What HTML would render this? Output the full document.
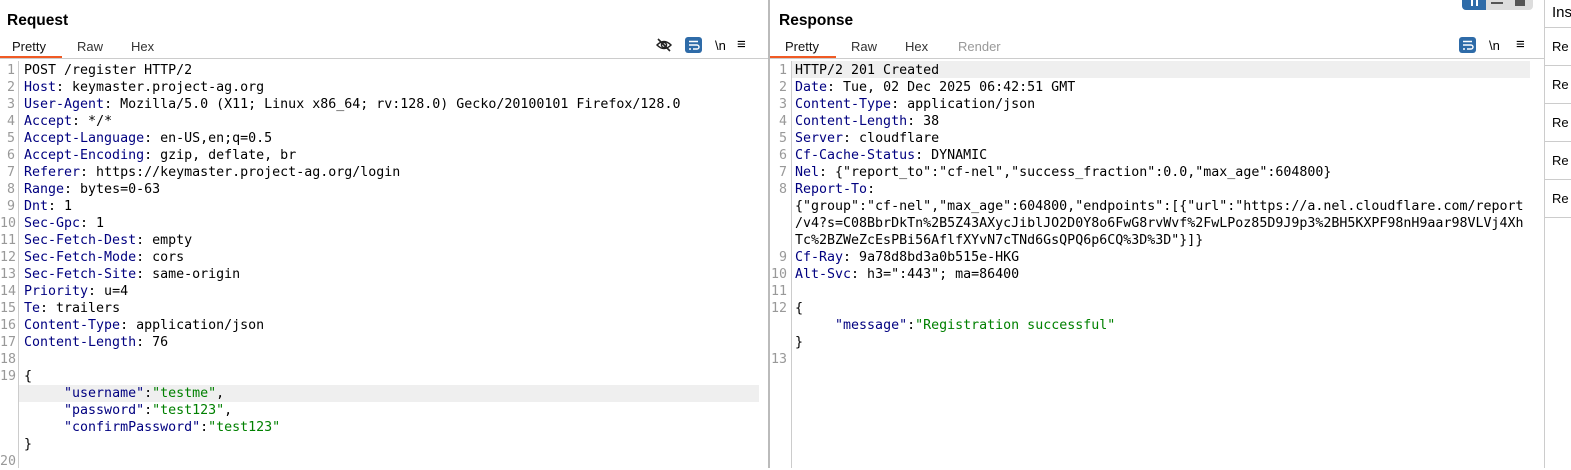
<!DOCTYPE html>
<html><head><meta charset="utf-8"><style>
*{margin:0;padding:0;box-sizing:border-box}
body{width:1571px;height:468px;overflow:hidden;background:#fff;font-family:"Liberation Sans","DejaVu Sans",sans-serif;color:#000;position:relative}
.abs{position:absolute}
.title{font-weight:bold;font-size:15.5px;top:12px}
.tab{font-size:13px;top:39px;color:#333}
.code{font-family:"DejaVu Sans Mono","Liberation Mono",monospace;font-size:13.3px;line-height:17px;white-space:pre;color:#000}
.ln{font-family:"DejaVu Sans Mono","Liberation Mono",monospace;font-size:13.3px;line-height:17px;color:#999;text-align:right;white-space:pre}
.k{color:#000080}.s{color:#008000}
.icon{position:absolute;top:38px;font-size:13px}
.btn{position:absolute;top:37px;width:17px;height:16px;background:#2e6ba8;border-radius:3px}
.sb{position:absolute;left:1545px;width:26px;border-bottom:1px solid #ccc;font-size:13px;padding-left:7px}
</style></head><body>
<div class="abs title" style="left:7px">Request</div>
<div class="abs tab" style="left:12px;color:#111">Pretty</div>
<div class="abs tab" style="left:77px">Raw</div>
<div class="abs tab" style="left:131px">Hex</div>
<div class="abs" style="left:0;top:56px;width:62px;height:2px;background:#f05a24"></div>
<div class="abs" style="left:0;top:58px;width:769px;height:1px;background:#ccc"></div>
<svg class="abs" style="left:656px;top:38px" width="16" height="14" viewBox="0 0 16 14"><path d="M1 7 Q8 0 15 7 Q8 14 1 7Z" fill="none" stroke="#222" stroke-width="1.5"/><circle cx="8" cy="7" r="2.5" fill="none" stroke="#222" stroke-width="1.5"/><path d="M2 1 L14 13" stroke="#222" stroke-width="1.6"/></svg>
<div class="btn" style="left:685px"><svg width="17" height="16"><path d="M4 4.5h9M4 8h8a2 2 0 0 1 0 4h-4M4 12h2" stroke="#fff" stroke-width="1.4" fill="none"/></svg></div>
<div class="icon" style="left:715px">\n</div>
<div class="icon" style="left:737px;font-size:15px;top:36px">≡</div>
<div class="abs" style="left:18px;top:385px;width:741px;height:17px;background:#efefef"></div>
<div class="abs" style="left:18px;top:61px;width:1px;height:407px;background:#ccc"></div>
<div class="abs ln" style="left:0;top:62px;width:15px">1
2
3
4
5
6
7
8
9
10
11
12
13
14
15
16
17
18
19



</div>
<div class="abs ln" style="left:0;top:453px;width:15px">20</div>
<div class="abs code" style="left:24px;top:62px">POST /register HTTP/2
<span class="k">Host</span>: keymaster.project-ag.org
<span class="k">User-Agent</span>: Mozilla/5.0 (X11; Linux x86_64; rv:128.0) Gecko/20100101 Firefox/128.0
<span class="k">Accept</span>: */*
<span class="k">Accept-Language</span>: en-US,en;q=0.5
<span class="k">Accept-Encoding</span>: gzip, deflate, br
<span class="k">Referer</span>: https://keymaster.project-ag.org/login
<span class="k">Range</span>: bytes=0-63
<span class="k">Dnt</span>: 1
<span class="k">Sec-Gpc</span>: 1
<span class="k">Sec-Fetch-Dest</span>: empty
<span class="k">Sec-Fetch-Mode</span>: cors
<span class="k">Sec-Fetch-Site</span>: same-origin
<span class="k">Priority</span>: u=4
<span class="k">Te</span>: trailers
<span class="k">Content-Type</span>: application/json
<span class="k">Content-Length</span>: 76

{
     <span class="k">"username"</span>:<span class="s">"testme"</span>,
     <span class="k">"password"</span>:<span class="s">"test123"</span>,
     <span class="k">"confirmPassword"</span>:<span class="s">"test123"</span>
}</div>
<div class="abs" style="left:768px;top:0;width:2px;height:468px;background:#bbb"></div>
<div class="abs title" style="left:779px">Response</div>
<div class="abs tab" style="left:785px;color:#111">Pretty</div>
<div class="abs tab" style="left:851px">Raw</div>
<div class="abs tab" style="left:905px">Hex</div>
<div class="abs tab" style="left:958px;color:#999">Render</div>
<div class="abs" style="left:770px;top:56px;width:66px;height:2px;background:#f05a24"></div>
<div class="abs" style="left:770px;top:58px;width:774px;height:1px;background:#ccc"></div>
<div class="btn" style="left:1459px"><svg width="17" height="16"><path d="M4 4.5h9M4 8h8a2 2 0 0 1 0 4h-4M4 12h2" stroke="#fff" stroke-width="1.4" fill="none"/></svg></div>
<div class="icon" style="left:1489px">\n</div>
<div class="icon" style="left:1516px;font-size:15px;top:36px">≡</div>
<div class="abs" style="left:1462px;top:0;width:71px;height:10px;background:#ddd;border-radius:0 0 4px 4px"></div>
<div class="abs" style="left:1462px;top:0;width:24px;height:10px;background:#2e6ba8;border-radius:0 0 0 4px"></div>
<div class="abs" style="left:1471px;top:0;width:2px;height:6px;background:#fff"></div>
<div class="abs" style="left:1476px;top:0;width:2px;height:6px;background:#fff"></div>
<div class="abs" style="left:1491px;top:2px;width:12px;height:2px;background:#555"></div>
<div class="abs" style="left:1515px;top:0;width:10px;height:6px;background:#555"></div>
<div class="abs" style="left:792px;top:61px;width:738px;height:17px;background:#efefef"></div>
<div class="abs" style="left:791px;top:61px;width:1px;height:407px;background:#ccc"></div>
<div class="abs ln" style="left:770px;top:62px;width:17px">1
2
3
4
5
6
7
8



9
10
11
12


13</div>
<div class="abs code" style="left:795px;top:62px">HTTP/2 201 Created
<span class="k">Date</span>: Tue, 02 Dec 2025 06:42:51 GMT
<span class="k">Content-Type</span>: application/json
<span class="k">Content-Length</span>: 38
<span class="k">Server</span>: cloudflare
<span class="k">Cf-Cache-Status</span>: DYNAMIC
<span class="k">Nel</span>: {"report_to":"cf-nel","success_fraction":0.0,"max_age":604800}
<span class="k">Report-To</span>:
{"group":"cf-nel","max_age":604800,"endpoints":[{"url":"https://a.nel.cloudflare.com/report
/v4?s=C08BbrDkTn%2B5Z43AXycJiblJO2D0Y8o6FwG8rvWvf%2FwLPoz85D9J9p3%2BH5KXPF98nH9aar98VLVj4Xh
Tc%2BZWeZcEsPBi56AflfXYvN7cTNd6GsQPQ6p6CQ%3D%3D"}]}
<span class="k">Cf-Ray</span>: 9a78d8bd3a0b515e-HKG
<span class="k">Alt-Svc</span>: h3=":443"; ma=86400

{
     <span class="k">"message"</span>:<span class="s">"Registration successful"</span>
}</div>
<div class="abs" style="left:1544px;top:0;width:1px;height:468px;background:#ccc"></div>
<div class="sb" style="top:0;height:28px;padding-top:4px;font-size:15px;padding-left:7px">Ins</div>
<div class="sb" style="top:28px;height:38px;padding-top:11px">Re</div>
<div class="sb" style="top:66px;height:38px;padding-top:11px">Re</div>
<div class="sb" style="top:104px;height:38px;padding-top:11px">Re</div>
<div class="sb" style="top:142px;height:38px;padding-top:11px">Re</div>
<div class="sb" style="top:180px;height:38px;padding-top:11px">Re</div>
</body></html>
